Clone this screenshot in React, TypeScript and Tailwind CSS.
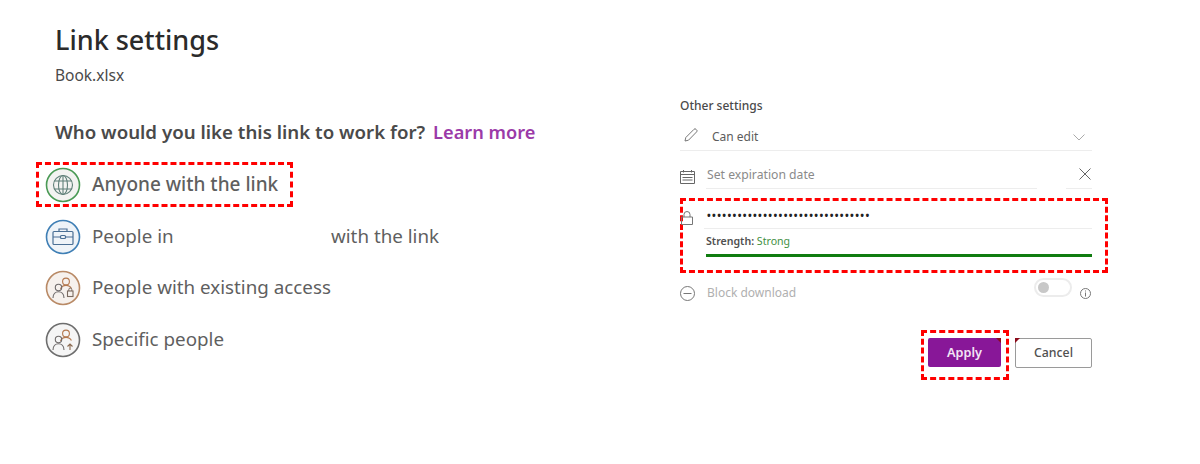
const font = { fontFamily: '"Noto Sans", "Open Sans", sans-serif' };

function Ring({ color, bg, children }: { color: string; bg: string; children: React.ReactNode }) {
  return (
    <svg width="36" height="36" viewBox="0 0 36 36" fill="none" className="shrink-0">
      <circle cx="18" cy="18" r="16.5" stroke={color} strokeWidth="1.6" fill={bg} />
      {children}
    </svg>
  );
}

function People() {
  return (
    <g stroke="#6e6a6a" strokeWidth="1.1" fill="none">
      <circle cx="21" cy="11.5" r="3.4" stroke="#b3784f" />
      <path d="M15.5 19c1-2.500 3-3.600 5.500-3.600s4.400 1 5.400 3.200" stroke="#b3784f" />
      <circle cx="13.500" cy="17.500" r="3.200" />
      <path d="M8 28c0-3.800 2.400-6.200 5.500-6.200s5.500 2.400 5.500 6.200" />
    </g>
  );
}

function OptionRow({ icon, children, boxed }: { icon: React.ReactNode; children: React.ReactNode; boxed?: boolean }) {
  return (
    <div
      className={
        boxed
          ? "flex h-[45px] w-[257px] items-center gap-[11px] border-[3px] border-dashed border-[#ff0000] pl-[6px]"
          : "flex h-[51px] items-center gap-[11px] pl-[9px]"
      }
    >
      {icon}
      <span className="text-[18.800px] text-[#5f5f5f]">{children}</span>
    </div>
  );
}

export default function App() {
  return (
    <div className="flex h-[464px] w-[1200px] overflow-hidden bg-white" style={font}>
      <div className="w-[680px] pl-[36px]">
        <div className="pl-[19px] pt-[22px]">
          <h1 className="text-[27px] leading-[36px] font-medium text-[#2b2b2b]">Link settings</h1>
          <p className="mt-[7px] text-[15.500px] leading-[20px] text-[#4a4a4a]">Book.xlsx</p>
          <p className="mt-[35px] text-[18.700px] leading-[24px] font-semibold text-[#4a4a4a]">
            Who would you like this link to work for?{" "}
            <span className="ml-[3px] text-[18.200px] text-[#9b3aa8]">Learn more</span>
          </p>
        </div>
        <div className="mt-[18px]">
          <OptionRow
            boxed
            icon={
              <Ring color="#4a9a55" bg="#f3f3f1">
                <g stroke="#5f7f78" strokeWidth="1.1">
                  <circle cx="18" cy="18" r="9.500" />
                  <ellipse cx="18" cy="18" rx="4.500" ry="9.500" />
                  <path d="M18 8.500v19M9.500 14h17M9.500 22h17" />
                </g>
              </Ring>
            }
          >
            <span className="text-[19px] font-medium">Anyone with the link</span>
          </OptionRow>
          <div className="mt-[4px]">
            <OptionRow
              icon={
                <Ring color="#3f7fb5" bg="#eef3f8">
                  <g stroke="#4a6f95" strokeWidth="1.2">
                    <rect x="8" y="12.500" width="20" height="13" rx="1" />
                    <path d="M14 12.500v-2.500h8v2.500M8 18h7M21 18h7" />
                    <rect x="15.500" y="16.500" width="5" height="3" rx="1" />
                  </g>
                </Ring>
              }
            >
              <span className="inline-block w-[239px]">People in</span>with the link
            </OptionRow>
            <OptionRow
              icon={
                <Ring color="#b98a66" bg="#f6f1ed">
                  <People />
                  <rect x="22.500" y="21" width="5.500" height="5.500" stroke="#7a6a60" strokeWidth="1.1" />
                  <path d="M23.800 21v-1.500a1.500 1.500 0 0 1 3 0V21" stroke="#7a6a60" />
                </Ring>
              }
            >
              People with existing access
            </OptionRow>
            <div className="mt-px">
              <OptionRow
                icon={
                  <Ring color="#6e6e6e" bg="#f5f5f5">
                    <People />
                    <path d="M25 22v6M22.500 24.500l2.500-2.500 2.500 2.500" stroke="#8a6a50" strokeWidth="1.100" />
                  </Ring>
                }
              >
                Specific people
              </OptionRow>
            </div>
          </div>
        </div>
      </div>

      <div className="w-[440px] pt-[97px] text-[12px]">
        <p className="text-[12px] leading-[18px] font-medium text-[#4a4a4a]">Other settings</p>
        <div className="w-[412px]">
          <div className="mt-[4px] flex h-[32px] items-center border-b border-[#ededed] pl-[4px] pr-[7px] pt-[5px]">
            <svg width="14" height="14" viewBox="0 0 14 14" fill="none" stroke="#777" strokeWidth="1" className="mb-[5px]">
              <path d="M1 13l.8-3.500L10 1.300a1.300 1.300 0 0 1 2 0l.6.6a1.300 1.300 0 0 1 0 2L4.500 12.200z" />
            </svg>
            <span className="ml-[14px] grow text-[#5c5c5c]">Can edit</span>
            <svg width="12" height="7" viewBox="0 0 12 7" fill="none" stroke="#aaa" strokeWidth="1">
              <path d="M.5.5L6 6 11.500.5" />
            </svg>
          </div>
          <div className="flex h-[38px]">
            <svg width="15" height="15" viewBox="0 0 15 15" fill="none" stroke="#666" strokeWidth="1" className="mt-[18px] shrink-0">
              <path d="M.5 2.500h14v12H.5zM.5 5.500h14M3.500 1v2.500M11.500 1v2.500M2.500 8.500h10M2.500 11h10" />
            </svg>
            <div className="ml-[11px] flex w-[331px] items-center border-b border-[#ededed] pt-[12px] pl-[1px]">
              <span className="text-[12.200px] text-[#8a8a8a]">Set expiration date</span>
            </div>
            <div className="ml-[29px] flex w-[26px] items-center justify-end border-b border-[#ededed] pt-[8px] pr-[1px]">
              <svg width="12" height="12" viewBox="0 0 12 12" stroke="#666" strokeWidth="1">
                <path d="M.5.500l11 11M11.500.500l-11 11" />
              </svg>
            </div>
          </div>
        </div>
        <div className="mt-[9px] h-[75px] w-[428px] border-[3px] border-dashed border-[#ff0000]">
          <div className="flex h-[28px] w-[409px]">
            <svg width="12" height="14" viewBox="0 0 12 14" fill="none" stroke="#777" strokeWidth="1" className="-ml-[2px] mt-[10px] shrink-0">
              <path d="M.5 6h11v7.500H.5zM3 6V3.500a3 3 0 0 1 6 0V6" />
            </svg>
            <div className="ml-[11px] flex grow items-center border-b border-[#ededed] pl-[3px]">
              <span className="text-[10px] leading-none font-bold tracking-[1.350px] text-[#222]">
                ••••••••••••••••••••••••••••••••
              </span>
            </div>
          </div>
          <div className="ml-[23px] w-[386px]">
            <p className="mt-[5px] text-[10.600px] leading-[14px] text-[#3f8f3f]">
              <span className="font-semibold text-[#505050]">Strength:</span> Strong
            </p>
            <div className="mt-[6px] h-[3px] bg-[#107c10]" />
          </div>
        </div>
        <div className="mt-[5px] flex h-[30px] w-[412px] items-center">
          <svg width="15" height="15" viewBox="0 0 15 15" fill="none" stroke="#777" strokeWidth="1" className="shrink-0">
            <circle cx="7.500" cy="7.500" r="7" />
            <path d="M3.500 7.500h8" />
          </svg>
          <span className="ml-[12px] grow text-[#b0b0b0]">Block download</span>
          <div className="mb-[11px] flex h-[19px] w-[38px] items-center rounded-full border-2 border-[#ececec] pl-[2px]">
            <div className="h-[11px] w-[11px] rounded-full bg-[#c8c8c8]" />
          </div>
          <svg width="11" height="11" viewBox="0 0 11 11" fill="none" stroke="#777" strokeWidth="1" className="ml-[8px] mr-[1px]">
            <circle cx="5.500" cy="5.500" r="5" />
            <path d="M5.500 4.500v4M5.500 2.500v1" />
          </svg>
        </div>
        <div className="mt-[22px] flex w-[412px] items-start justify-end">
          <div className="flex h-[50px] w-[88px] justify-end border-[3px] border-dashed border-[#ff0000] pr-[5px] pt-[5px]">
            <button className="relative h-[29px] w-[73px] rounded-[2px] bg-[#881798] text-[12.700px] font-semibold text-[#f3e6f5]">
              Apply
              <span className="absolute right-0 top-0 h-0 w-0 border-l-[5px] border-t-[5px] border-l-transparent border-t-[#8b0a1a]" />
            </button>
          </div>
          <button className="relative ml-[6px] mt-[8px] h-[30px] w-[77px] rounded-[2px] border border-[#9a9a9a] text-[12.300px] font-medium text-[#505050]">
            Cancel
            <span className="absolute -left-px -top-px h-0 w-0 border-r-[5px] border-t-[5px] border-r-transparent border-t-[#8b0a1a]" />
          </button>
        </div>
      </div>
    </div>
  );
}
